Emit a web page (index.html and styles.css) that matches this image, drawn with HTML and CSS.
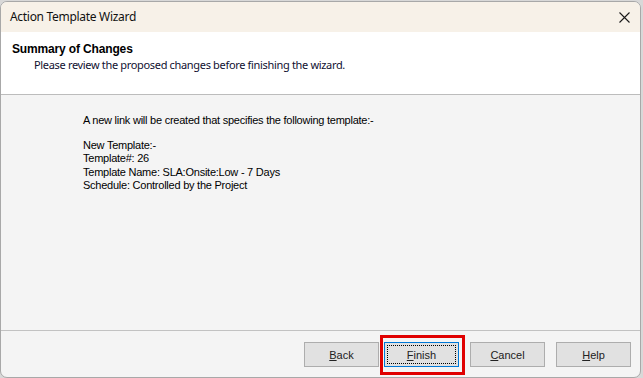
FILE: index.html
```html
<!DOCTYPE html>
<html>
<head>
<meta charset="utf-8">
<link rel="stylesheet" href="styles.css">
</head>
<body>
<div class="window">
  <div class="titlebar">
    <span class="title">Action Template Wizard</span>
    <span class="close">
      <svg width="11" height="11" viewBox="0 0 11 11"><path d="M0.5 0.5 L10.5 10.5 M10.5 0.5 L0.5 10.5" stroke="#1a1a1a" stroke-width="1.1" fill="none"/></svg>
    </span>
  </div>
  <div class="header">
    <div class="h-title">Summary of Changes</div>
    <div class="h-sub">Please review the proposed changes before finishing the wizard.</div>
  </div>
  <div class="content">
    <p class="intro">A new link will be created that specifies the following template:-</p>
    <p class="line">New Template:-</p>
    <p class="line">Template#: 26</p>
    <p class="line">Template Name: SLA:Onsite:Low - 7 Days</p>
    <p class="line">Schedule: Controlled by the Project</p>
  </div>
  <div class="footer">
    <button class="btn back"><u>B</u>ack</button>
    <span class="finish-wrap">
      <button class="btn finish"><span class="focus"><u>F</u>inish</span></button>
      <span class="highlight"></span>
    </span>
    <button class="btn"><u>C</u>ancel</button>
    <button class="btn"><u>H</u>elp</button>
  </div>
</div>
</body>
</html>
```

FILE: styles.css
```css
html, body {
  margin: 0;
  padding: 0;
}
body {
  width: 643px;
  height: 378px;
  background: #d8d8d8;
  overflow: hidden;
}
.window {
  box-sizing: border-box;
  width: 641px;
  height: 377px;
  margin-top: 1px;
  border: 1px solid #a8a8a8;
  border-radius: 7px;
  background: #f4f4f4;
  display: flex;
  flex-direction: column;
  overflow: hidden;
  font-family: "Liberation Sans", Arial, sans-serif;
  font-size: 11px;
  color: #000;
}
.titlebar {
  height: 30px;
  background: #f7f1e8;
  display: flex;
  align-items: center;
  justify-content: space-between;
  padding-left: 9px;
  padding-right: 8px;
  flex-shrink: 0;
}
.title {
  font-family: "Noto Sans", "Segoe UI", sans-serif;
  font-size: 12px;
  letter-spacing: -0.3px;
  color: #111;
  margin-top: -1px;
}
.close {
  width: 11px;
  height: 11px;
  display: flex;
  margin-right: 2px;
}
.header {
  height: 52px;
  background: #fff;
  border-bottom: 1px solid #bcbcbc;
  padding: 10px 0 0 11px;
  flex-shrink: 0;
}
.h-title {
  font-family: "Liberation Sans", Arial, sans-serif;
  font-weight: bold;
  font-size: 12px;
  letter-spacing: -0.15px;
  line-height: 15px;
  color: #000;
}
.h-sub {
  font-family: "Noto Sans", "Segoe UI", sans-serif;
  font-size: 11px;
  letter-spacing: -0.33px;
  line-height: 15px;
  margin-left: 22px;
  color: #101030;
}
.content {
  flex: 1;
  padding: 19px 0 0 82px;
  letter-spacing: -0.24px;
}
.content p {
  margin: 0;
  line-height: 13.5px;
}
.intro {
  margin-bottom: 11px !important;
}
.footer {
  flex-shrink: 0;
  height: 35px;
  border-top: 1px solid #c2c2c2;
  display: flex;
  justify-content: flex-end;
  align-items: flex-start;
  padding: 11px 9px 0 0;
  gap: 11px;
}
.btn {
  box-sizing: border-box;
  width: 75px;
  height: 25px;
  border: 1px solid #adadad;
  background: #e1e1e1;
  font-family: "Liberation Sans", Arial, sans-serif;
  font-size: 11px;
  color: #222;
  padding: 0;
  margin: 0;
}
.back {
  margin-right: -6px;
}
.finish-wrap {
  position: relative;
  display: flex;
}
.finish {
  border: 1px solid #0078d7;
  padding: 2px;
  display: flex;
}
.focus {
  flex: 1;
  border: 1px dotted #000;
  display: flex;
  align-items: center;
  justify-content: center;
}
.highlight {
  position: absolute;
  left: -4px;
  right: -6px;
  top: -7px;
  bottom: -8px;
  border: 3px solid #e00000;
  pointer-events: none;
}
```
